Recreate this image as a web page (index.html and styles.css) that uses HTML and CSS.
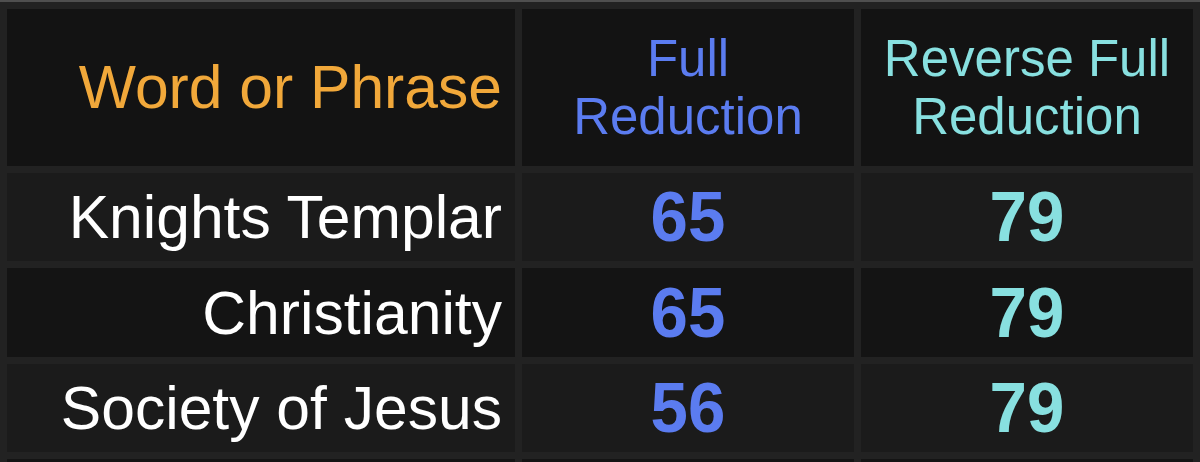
FILE: index.html
```html
<!DOCTYPE html>
<html lang="en">
<head>
<meta charset="utf-8">
<title>Word or Phrase</title>
<link rel="stylesheet" href="styles.css">
</head>
<body>
<div class="frame">
  <table class="gem">
    <colgroup>
      <col class="c-word">
      <col class="c-num">
      <col class="c-num">
    </colgroup>
    <thead>
      <tr class="head">
        <th class="word h-word">Word or Phrase</th>
        <th class="h-full">Full<br>Reduction</th>
        <th class="h-rev">Reverse Full<br>Reduction</th>
      </tr>
    </thead>
    <tbody>
      <tr class="row light">
        <td class="word">Knights Templar</td>
        <td class="num full"><span>65</span></td>
        <td class="num rev"><span>79</span></td>
      </tr>
      <tr class="row dark">
        <td class="word">Christianity</td>
        <td class="num full"><span>65</span></td>
        <td class="num rev"><span>79</span></td>
      </tr>
      <tr class="row light">
        <td class="word">Society of Jesus</td>
        <td class="num full"><span>56</span></td>
        <td class="num rev"><span>79</span></td>
      </tr>
      <tr class="row dark">
        <td class="word"></td>
        <td class="num"></td>
        <td class="num"></td>
      </tr>
    </tbody>
  </table>
</div>
</body>
</html>
```

FILE: styles.css
```css
html, body {
  margin: 0;
  padding: 0;
  background: #222222;
  overflow: hidden;
}

body {
  width: 1200px;
  height: 462px;
  font-family: "Liberation Sans", Arial, Helvetica, sans-serif;
}

.frame {
  height: 460px;
  overflow: hidden;
  border-top: 2px solid #4f4f4f;
}

.gem {
  width: 1200px;
  table-layout: fixed;
  border-collapse: separate;
  border-spacing: 7px;
}

.c-word { width: 508px; }
.c-num { width: 332px; }

.gem th,
.gem td {
  padding: 0;
  vertical-align: middle;
  text-align: center;
}

.head { height: 157px; }
.head th {
  background: #131313;
  font-weight: normal;
  font-size: 51px;
  line-height: 58px;
}

.h-word {
  color: #f1a83a;
  font-size: 60.6px !important;
  line-height: 69px !important;
}
.h-full { color: #5b7cf0; }
.h-rev { color: #88e0e0; }

.row { height: 88px; }
.row.dark { height: 89px; }
.row.light td { background: #1b1b1b; }
.row.dark td { background: #141414; }

.gem .word {
  text-align: right;
  padding-right: 13px;
}

.row .word {
  color: #ffffff;
  font-size: 60.6px;
}

.num {
  font-weight: bold;
  font-size: 70px;
}
.num span {
  display: inline-block;
  transform: scaleX(0.96);
}
.num.full { color: #5b7cf0; }
.num.rev { color: #88e0e0; }
```
